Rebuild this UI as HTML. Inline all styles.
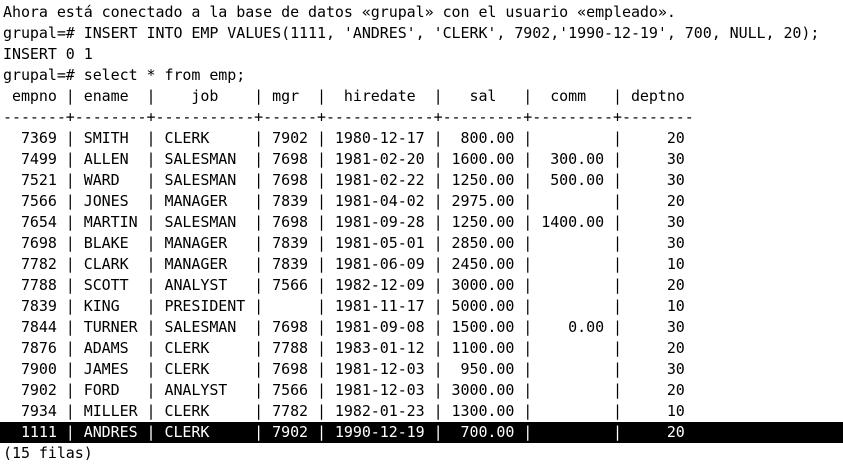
<!DOCTYPE html>
<html><head><meta charset="utf-8"><style>
html,body{margin:0;padding:0;background:#fff;width:843px;height:474px;overflow:hidden}
pre{margin:0;padding:2px 0 0 3px;font-family:"DejaVu Sans Mono","Liberation Mono",monospace;font-size:15px;line-height:21px;color:#000;letter-spacing:-0.06px}
.hl{background:#000;color:#fff;display:block;margin-left:-3px;padding-left:3px;width:840px}
</style></head><body><pre>Ahora está conectado a la base de datos «grupal» con el usuario «empleado».
grupal=# INSERT INTO EMP VALUES(1111, 'ANDRES', 'CLERK', 7902,'1990-12-19', 700, NULL, 20);
INSERT 0 1
grupal=# select * from emp;
 empno | ename  |    job    | mgr  |  hiredate  |   sal   |  comm   | deptno
-------+--------+-----------+------+------------+---------+---------+--------
  7369 | SMITH  | CLERK     | 7902 | 1980-12-17 |  800.00 |         |     20
  7499 | ALLEN  | SALESMAN  | 7698 | 1981-02-20 | 1600.00 |  300.00 |     30
  7521 | WARD   | SALESMAN  | 7698 | 1981-02-22 | 1250.00 |  500.00 |     30
  7566 | JONES  | MANAGER   | 7839 | 1981-04-02 | 2975.00 |         |     20
  7654 | MARTIN | SALESMAN  | 7698 | 1981-09-28 | 1250.00 | 1400.00 |     30
  7698 | BLAKE  | MANAGER   | 7839 | 1981-05-01 | 2850.00 |         |     30
  7782 | CLARK  | MANAGER   | 7839 | 1981-06-09 | 2450.00 |         |     10
  7788 | SCOTT  | ANALYST   | 7566 | 1982-12-09 | 3000.00 |         |     20
  7839 | KING   | PRESIDENT |      | 1981-11-17 | 5000.00 |         |     10
  7844 | TURNER | SALESMAN  | 7698 | 1981-09-08 | 1500.00 |    0.00 |     30
  7876 | ADAMS  | CLERK     | 7788 | 1983-01-12 | 1100.00 |         |     20
  7900 | JAMES  | CLERK     | 7698 | 1981-12-03 |  950.00 |         |     30
  7902 | FORD   | ANALYST   | 7566 | 1981-12-03 | 3000.00 |         |     20
  7934 | MILLER | CLERK     | 7782 | 1982-01-23 | 1300.00 |         |     10
<span class="hl">  1111 | ANDRES | CLERK     | 7902 | 1990-12-19 |  700.00 |         |     20</span>(15 filas)
</pre></body></html>
